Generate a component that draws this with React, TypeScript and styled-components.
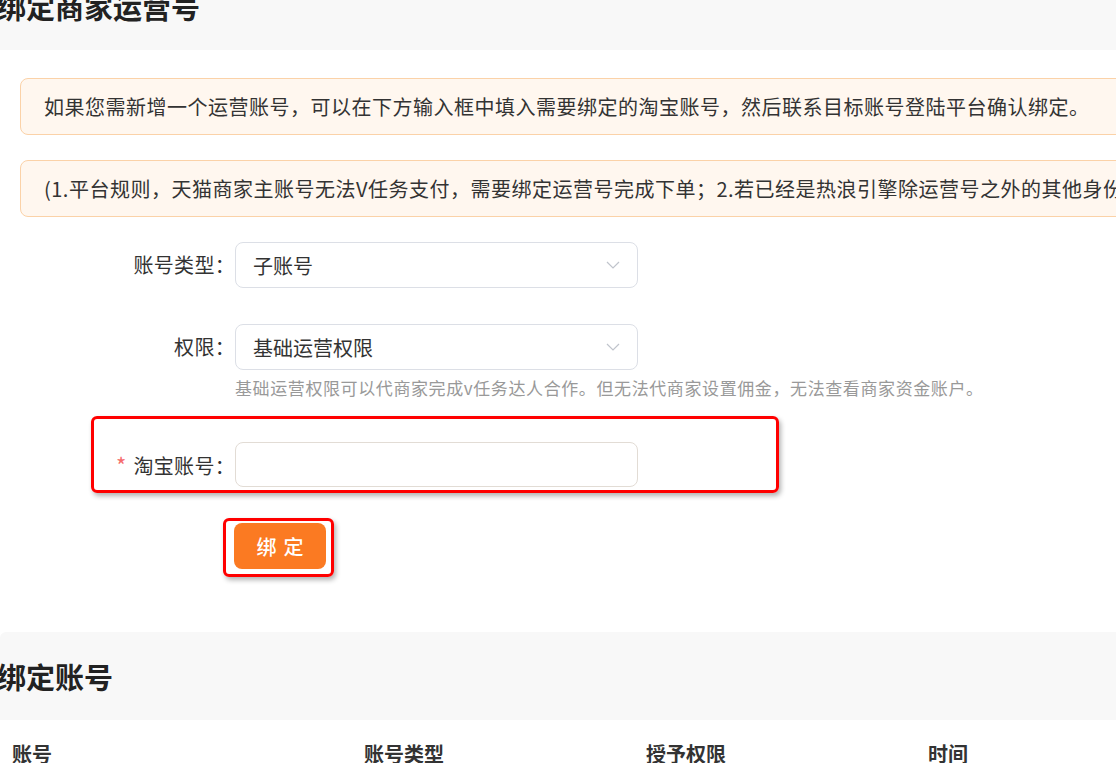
import styled, { createGlobalStyle } from "styled-components";

const GlobalStyle = createGlobalStyle`
  html, body {
    margin: 0;
    padding: 0;
    background: #ffffff;
  }
  body {
    font-family: "PingFang SC", "Noto Sans CJK SC", "Noto Sans", sans-serif;
    color: #333333;
    overflow: hidden;
  }
  * {
    box-sizing: border-box;
  }
`;

const Page = styled.div`
  width: 1116px;
  height: 763px;
  overflow: hidden;
`;

const SectionHeader = styled.div<{ $first?: boolean }>`
  height: 88px;
  margin-top: ${(p) => (p.$first ? "-38px" : "0")};
  background: #f8f8f8;
  border-radius: 6px 0 0 0;
  display: flex;
  align-items: center;

  h2 {
    margin: 0 0 0 -3px;
    font-size: 29px;
    line-height: 36px;
    font-weight: 700;
    color: #222222;
  }
`;

const Content = styled.div`
  padding: 28px 0 63px 20px;
`;

const Alert = styled.div`
  height: 57px;
  margin-right: -40px;
  margin-bottom: 25px;
  padding-left: 23px;
  border: 1px solid #fbd2a8;
  border-radius: 8px;
  background: #fff7ef;
  font-size: 20px;
  letter-spacing: 0.5px;
  line-height: 55px;
  color: #333333;
  white-space: nowrap;
  overflow: hidden;
`;

const Form = styled.div`
  display: flex;
  flex-direction: column;
  align-items: flex-start;
`;

const FormItem = styled.div<{ $gap?: number }>`
  margin-top: ${(p) => p.$gap ?? 0}px;
  display: flex;
  flex-direction: column;
`;

const FormRow = styled.div`
  position: relative;
  display: flex;
  align-items: center;
  width: max-content;
`;

const Label = styled.label`
  width: 215px;
  flex-shrink: 0;
  text-align: right;
  font-size: 20px;
  letter-spacing: 0.3px;
  line-height: 28px;
  color: #333333;
  white-space: nowrap;
`;

const Required = styled.span`
  color: #f56c6c;
  font-size: 22px;
  margin-right: 7px;
`;

const Select = styled.div`
  width: 403px;
  height: 46px;
  padding: 0 17px 0 17px;
  border: 1px solid #dcdfe6;
  border-radius: 8px;
  display: flex;
  align-items: center;
  justify-content: space-between;
  font-size: 20px;
  color: #333333;
  background: #ffffff;
`;

const Input = styled.input`
  width: 403px;
  height: 45px;
  padding: 0 17px;
  border: 1px solid #e2dcd5;
  border-radius: 8px;
  font-size: 20px;
  font-family: inherit;
  color: #333333;
  outline: none;
`;

const Help = styled.div`
  margin: 6px 0 0 215px;
  font-size: 17px;
  letter-spacing: 0.6px;
  line-height: 24px;
  color: #999999;
  white-space: nowrap;
`;

const Highlight = styled.div<{ $l: number; $t: number; $r: number; $b: number }>`
  position: absolute;
  left: ${(p) => p.$l}px;
  top: ${(p) => p.$t}px;
  right: ${(p) => p.$r}px;
  bottom: ${(p) => p.$b}px;
  border: 3px solid #ff0000;
  border-radius: 6px;
  box-shadow: 2px 3px 5px rgba(0, 0, 0, 0.3);
  pointer-events: none;
`;

const ButtonWrap = styled.div`
  position: relative;
  margin: 36px 0 0 214px;
  width: 92px;
`;

const BindButton = styled.button`
  width: 92px;
  height: 46px;
  border: none;
  border-radius: 8px;
  background: #fb7a22;
  color: #ffffff;
  font-family: inherit;
  font-size: 20px;
  font-weight: 500;
  letter-spacing: 7px;
  text-indent: 7px;
  cursor: pointer;
`;

const TableHead = styled.div`
  height: 66px;
  display: grid;
  grid-template-columns: 352px 282px 282px 1fr;
  align-items: center;
  padding-left: 12px;

  span {
    font-size: 20px;
    font-weight: 600;
    color: #333333;
  }
`;

const Chevron = () => (
  <svg width="14" height="8" viewBox="0 0 14 8" fill="none">
    <polyline points="1,1 7,7 13,1" stroke="#c0c4cc" strokeWidth="1.2" />
  </svg>
);

export default function App() {
  return (
    <Page>
      <GlobalStyle />
      <SectionHeader $first>
        <h2>绑定商家运营号</h2>
      </SectionHeader>

      <Content>
        <Alert>
          如果您需新增一个运营账号，可以在下方输入框中填入需要绑定的淘宝账号，然后联系目标账号登陆平台确认绑定。
        </Alert>
        <Alert>
          (1.平台规则，天猫商家主账号无法V任务支付，需要绑定运营号完成下单；2.若已经是热浪引擎除运营号之外的其他身份，则无法绑定为运营号)
        </Alert>

        <Form>
          <FormItem>
            <FormRow>
              <Label>账号类型：</Label>
              <Select>
                子账号
                <Chevron />
              </Select>
            </FormRow>
          </FormItem>

          <FormItem $gap={36}>
            <FormRow>
              <Label>权限：</Label>
              <Select>
                基础运营权限
                <Chevron />
              </Select>
            </FormRow>
            <Help>基础运营权限可以代商家完成v任务达人合作。但无法代商家设置佣金，无法查看商家资金账户。</Help>
          </FormItem>

          <FormItem $gap={42}>
            <FormRow>
              <Label>
                <Required>*</Required>淘宝账号：
              </Label>
              <Input />
              <Highlight $l={71} $t={-26} $r={-141} $b={-6} />
            </FormRow>
          </FormItem>

          <ButtonWrap>
            <BindButton>绑定</BindButton>
            <Highlight $l={-11} $t={-5} $r={-8} $b={-8} />
          </ButtonWrap>
        </Form>
      </Content>

      <SectionHeader>
        <h2>绑定账号</h2>
      </SectionHeader>
      <TableHead>
        <span>账号</span>
        <span>账号类型</span>
        <span>授予权限</span>
        <span>时间</span>
      </TableHead>
    </Page>
  );
}
